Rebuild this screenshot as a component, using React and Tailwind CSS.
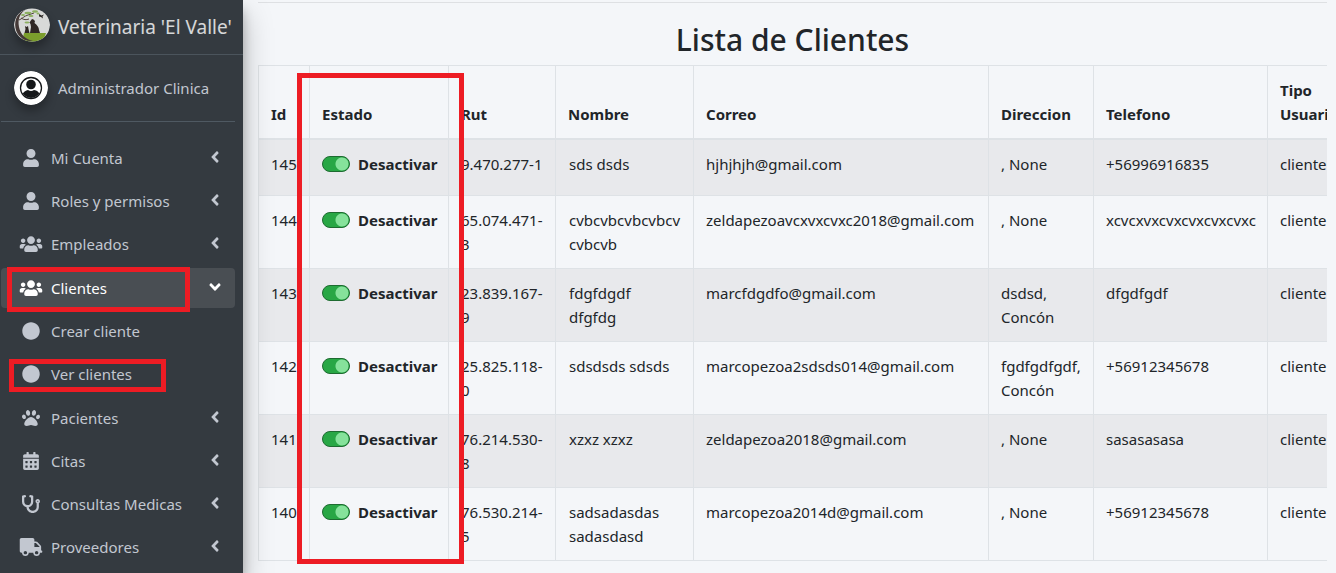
import React from "react";
import {
  FaUser,
  FaUsers,
  FaCircle,
  FaPaw,
  FaCalendarAlt,
  FaStethoscope,
  FaTruck,
  FaAngleLeft,
  FaAngleDown,
} from "react-icons/fa";

const clients = [
  { id: 145, rut: "9.470.277-1", name: "sds dsds", mail: "hjhjhjh@gmail.com", address: ", None", phone: "+56996916835" },
  { id: 144, rut: "65.074.471-3", name: "cvbcvbcvbcvbcv cvbcvb", mail: "zeldapezoavcxvxcvxc2018@gmail.com", address: ", None", phone: "xcvcxvxcvxcvxcvxcvxc" },
  { id: 143, rut: "23.839.167-9", name: "fdgfdgdf dfgfdg", mail: "marcfdgdfo@gmail.com", address: "dsdsd, Concón", phone: "dfgdfgdf" },
  { id: 142, rut: "25.825.118-0", name: "sdsdsds sdsds", mail: "marcopezoa2sdsds014@gmail.com", address: "fgdfgdfgdf, Concón", phone: "+56912345678" },
  { id: 141, rut: "76.214.530-8", name: "xzxz xzxz", mail: "zeldapezoa2018@gmail.com", address: ", None", phone: "sasasasasa" },
  { id: 140, rut: "76.530.214-5", name: "sadsadasdas sadasdasd", mail: "marcopezoa2014d@gmail.com", address: ", None", phone: "+56912345678" },
];

const headings = ["Id", "Estado", "Rut", "Nombre", "Correo", "Direccion", "Telefono", "Tipo Usuario"];

function Highlight({ className }) {
  return <span aria-hidden="true" className={"pointer-events-none absolute z-10 border-[5px] border-[#ed1c24] " + className} />;
}

function NavItem({ icon: Icon, label, arrow = true, open = false, mark }) {
  const Arrow = open ? FaAngleDown : FaAngleLeft;
  return (
    <li className="relative">
      <a
        href="#"
        className={
          "flex h-10 items-center rounded pl-[18px] pr-[11px] " +
          (open ? "bg-[#494e53] text-white" : "text-[#c2c7d0]")
        }
      >
        <Icon className="h-[18px] w-6 shrink-0" />
        <span className="ml-2 flex-1 whitespace-nowrap">{label}</span>
        {arrow && <Arrow className="mb-0.5 size-[18px]" />}
      </a>
      {mark && <Highlight className={mark} />}
    </li>
  );
}

function ClinicLogo() {
  return (
    <svg viewBox="0 0 36 34" className="h-[34px] w-9 shrink-0 rounded-full shadow-[0_6px_10px_rgba(0,0,0,0.3)]" aria-hidden="true">
      <defs>
        <clipPath id="logo-disc"><ellipse cx="18" cy="17" rx="18" ry="16.5" /></clipPath>
      </defs>
      <g clipPath="url(#logo-disc)">
        <rect width="36" height="34" fill="#d8d9d8" />
        <path d="M10 25H32L29 34H8Z" fill="#7b9d2c" />
        <path d="M13 1C6 4 3.500 11 5 19C6.500 27 12 31.500 19 33C10 34 3 28 1.500 20C0 11 4 4 13 1Z" fill="#443836" />
        <path d="M5 12C8 11 10 8 14 7L20 5M7 10C10 12 12 12 15 11" stroke="#51433d" strokeWidth="1" fill="none" />
        <g fill="#8daf60">
          <ellipse cx="14" cy="5" rx="3.500" ry="1.200" /><ellipse cx="21" cy="3.500" rx="3" ry="1.200" />
          <ellipse cx="17" cy="8" rx="2.500" ry="1.100" /><ellipse cx="24" cy="5.500" rx="1.500" ry="1" />
          <ellipse cx="13" cy="14.500" rx="2.500" ry="1.100" /><ellipse cx="9" cy="7" rx="2" ry="1" />
        </g>
        <path d="M25 6L27.500 7.500L30 6.500L28.500 8.500L29 10.500L27 9L25 8.500Z" fill="#2d2926" />
        <path d="M16.500 13L18 11L19.500 11.500L21 13L20.500 15C23 17 25 19 25 22L26 25H16L17 19L16.500 16L15.500 14.500Z" fill="#302724" />
        <path d="M11 18L12.500 19L14 18L14.500 21L15.500 25H10.500L11.500 21Z" fill="#302724" />
      </g>
    </svg>
  );
}

function Avatar() {
  return (
    <svg viewBox="0 0 34 34" className="size-[34px] shrink-0 rounded-full shadow-[0_6px_10px_rgba(0,0,0,0.3)]" aria-hidden="true">
      <defs><clipPath id="avatar-ring"><circle cx="17" cy="17" r="10" /></clipPath></defs>
      <circle cx="17" cy="17" r="17" fill="#fff" />
      <circle cx="17" cy="17" r="10.500" fill="none" stroke="#151719" strokeWidth="1.300" />
      <g clipPath="url(#avatar-ring)" fill="#151719">
        <circle cx="17" cy="13.500" r="4.800" />
        <path d="M8 28V24C9 21 12 19.500 14 19C16 20.200 18 20.200 20 19C23 19.500 25 21 26 24V28Z" />
      </g>
    </svg>
  );
}

function Sidebar() {
  return (
    <aside className="relative z-10 min-h-screen w-[243px] shrink-0 bg-[#343a40] shadow-[0_14px_28px_rgba(0,0,0,0.25),0_10px_10px_rgba(0,0,0,0.22)]">
      <a href="#" className="flex h-[55px] items-center border-b border-[#4b545c] pb-1 pl-3.5 text-[19px] text-white/80">
        <ClinicLogo />
        <span className="ml-2 whitespace-nowrap pt-1">Veterinaria 'El Valle'</span>
      </a>
      <div className="ml-px mr-2 flex h-[67px] items-center border-b border-[#4f5962] pl-[13px]">
        <Avatar />
        <a href="#" className="ml-2.5 whitespace-nowrap text-[#c2c7d0]">Administrador Clinica</a>
      </div>
      <nav className="ml-px mr-2 mt-4" aria-label="Menu">
        <ul className="flex flex-col gap-[3px]">
          <NavItem icon={FaUser} label="Mi Cuenta" />
          <NavItem icon={FaUser} label="Roles y permisos" />
          <NavItem icon={FaUsers} label="Empleados" />
          <li className="py-px">
            <ul className="flex flex-col gap-[3px]">
              <NavItem icon={FaUsers} label="Clientes" open mark="left-1.5 -top-px h-[45px] w-[183px]" />
              <NavItem icon={FaCircle} label="Crear cliente" arrow={false} />
              <NavItem icon={FaCircle} label="Ver clientes" arrow={false} mark="left-2 top-[5px] h-[33px] w-[157px]" />
            </ul>
          </li>
          <NavItem icon={FaPaw} label="Pacientes" />
          <NavItem icon={FaCalendarAlt} label="Citas" />
          <NavItem icon={FaStethoscope} label="Consultas Medicas" />
          <NavItem icon={FaTruck} label="Proveedores" />
        </ul>
      </nav>
    </aside>
  );
}

function StateSwitch({ id }) {
  return (
    <label htmlFor={"state-" + id} className="flex h-6 items-center gap-2 font-bold">
      <input
        id={"state-" + id}
        type="checkbox"
        role="switch"
        defaultChecked
        className="h-4 w-7 shrink-0 appearance-none rounded-full border border-[#1e6b31] bg-[#28a745] bg-[radial-gradient(circle_at_19px_7px,#86e29b_6px,transparent_7px)]"
      />
      Desactivar
    </label>
  );
}

export default function App() {
  const cell = "border-b border-r border-[#dee2e6] px-3 py-3 align-top";
  const nameCell = "border-b border-r border-[#dee2e6] py-3 pl-[13px] pr-3 align-top";
  return (
    <div className="flex h-screen overflow-hidden bg-[#f4f6f9] font-['Noto_Sans',sans-serif] text-[15px] leading-6 text-[#212529]">
      <Sidebar />
      <main className="min-w-0 flex-1 pl-[15px] pr-[9px] pt-0.5">
        <hr className="border-[#dee0e3]" />
        <h1 className="mt-[18px] text-center text-[30px] font-medium leading-[38px]">Lista de Clientes</h1>
        <div className="relative mt-1.5">
          <div className="overflow-hidden">
            <table className="w-[1109px] table-fixed border-separate border-spacing-0 border-l border-t border-[#dee2e6]">
              <colgroup>
                <col className="w-[51px]" />
                <col className="w-[139px]" />
                <col className="w-[107px]" />
                <col className="w-[138px]" />
                <col className="w-[295px]" />
                <col className="w-[105px]" />
                <col className="w-[174px]" />
                <col className="w-[100px]" />
              </colgroup>
              <thead>
                <tr>
                  {headings.map((h) => (
                    <th key={h} scope="col" className="border-b-2 border-r border-[#dee2e6] px-3 py-3 text-left align-bottom font-bold">{h}</th>
                  ))}
                </tr>
              </thead>
              <tbody>
                {clients.map((c) => (
                  <tr key={c.id} className="h-14 odd:bg-[#e8e9ec]">
                    <td className={cell}>{c.id}</td>
                    <td className={cell}><StateSwitch id={c.id} /></td>
                    <td className={cell}>{c.rut}</td>
                    <td className={nameCell}>{c.name}</td>
                    <td className={cell}>{c.mail}</td>
                    <td className={cell}>{c.address}</td>
                    <td className={cell}>{c.phone}</td>
                    <td className={cell}>cliente</td>
                  </tr>
                ))}
              </tbody>
            </table>
          </div>
          <Highlight className="left-[39px] top-2 h-[491px] w-[167px]" />
        </div>
      </main>
    </div>
  );
}
